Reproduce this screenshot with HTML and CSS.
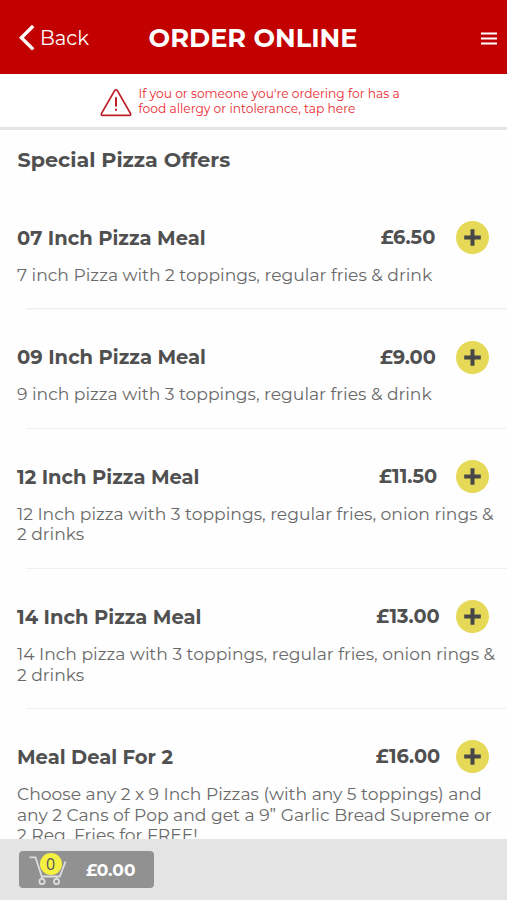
FILE: index.html
```
<!DOCTYPE html>
<html lang="en">
<head>
<meta charset="utf-8">
<title>Order Online</title>
<link rel="stylesheet" href="styles.css">
</head>
<body>
<svg class="defs" aria-hidden="true">
  <symbol id="plus" viewBox="0 0 33 33">
    <circle cx="16.5" cy="16.5" r="16.5" fill="#e5d957"/>
    <path d="M16.5 8.2v16.6M8.2 16.500h16.600" stroke="#484848" stroke-width="4" fill="none"/>
  </symbol>
</svg>
<div class="app">
  <header class="topbar">
    <a class="back">
      <svg class="chevron" viewBox="0 0 17 28"><path d="M15.200 2 3.400 13.700l11.800 11.700" fill="none" stroke="#fff" stroke-width="3.400"/></svg>
      <span>Back</span>
    </a>
    <h1 class="title">ORDER ONLINE</h1>
    <svg class="menu" viewBox="0 0 16 13"><path d="M0 1.600h16M0 6.600h16M0 11.600h16" stroke="#fff" stroke-width="2"/></svg>
  </header>
  <div class="notice">
    <svg class="warning" viewBox="0 0 32 29"><path d="M16 1.700c.6 0 1 .3 1.300.8l13.200 23c.6 1 .1 1.900-1 1.900h-27c-1.100 0-1.600-.9-1-1.900l13.200-23c.3-.5.7-.8 1.300-.8z" fill="none" stroke="#bd2029" stroke-width="1.600"/><path d="M16 9.300v9.200M16 20.800v2" stroke="#bd2029" stroke-width="2"/></svg>
    <p class="notice-text">If you or someone you're ordering for has a<br>food allergy or intolerance, tap here</p>
  </div>
  <main class="list">
    <h2 class="section">Special Pizza Offers</h2>
    <article class="item">
      <div class="head"><h3 class="name">07 Inch Pizza Meal</h3><span class="price">£6.50</span><svg class="add"><use href="#plus"/></svg></div>
      <p class="desc">7 inch Pizza with 2 toppings, regular fries &amp; drink</p>
    </article>
    <article class="item">
      <div class="head"><h3 class="name">09 Inch Pizza Meal</h3><span class="price">£9.00</span><svg class="add"><use href="#plus"/></svg></div>
      <p class="desc">9 inch pizza with 3 toppings, regular fries &amp; drink</p>
    </article>
    <article class="item">
      <div class="head"><h3 class="name">12 Inch Pizza Meal</h3><span class="price">£11.50</span><svg class="add"><use href="#plus"/></svg></div>
      <p class="desc">12 Inch pizza with 3 toppings, regular fries, onion rings &amp;<br>2 drinks</p>
    </article>
    <article class="item">
      <div class="head"><h3 class="name">14 Inch Pizza Meal</h3><span class="price">£13.00</span><svg class="add"><use href="#plus"/></svg></div>
      <p class="desc">14 Inch pizza with 3 toppings, regular fries, onion rings &amp;<br>2 drinks</p>
    </article>
    <article class="item">
      <div class="head"><h3 class="name">Meal Deal For 2</h3><span class="price">£16.00</span><svg class="add"><use href="#plus"/></svg></div>
      <p class="desc">Choose any 2 x 9 Inch Pizzas (with any 5 toppings) and<br>any 2 Cans of Pop and get a 9” Garlic Bread Supreme or<br>2 Reg. Fries for FREE!</p>
    </article>
  </main>
  <footer class="bottombar">
    <div class="basket">
      <div class="cart">
        <svg class="cart-icon" viewBox="0 0 38 32"><g fill="none" stroke="#ddd" stroke-width="1.800"><path d="M.5 3.300h6l6.300 19.200h18L36.500 7.500"/><path d="M12.800 22.500v2.500M28 22.500v2.500"/><circle cx="13" cy="27.500" r="2.600"/><circle cx="27.500" cy="27.500" r="2.600"/></g></svg>
        <span class="badge">0</span>
      </div>
      <span class="total">£0.00</span>
    </div>
  </footer>
</div>
</body>
</html>
```
FILE: styles.css
```
* { box-sizing: border-box; margin: 0; padding: 0; }

body {
  font-family: Montserrat, Inter, sans-serif;
  color: #505050;
  background: #fefefe;
}

.defs { display: none; }

.app {
  display: flex;
  flex-direction: column;
  height: 900px;
  overflow: hidden;
}

.topbar {
  flex: none;
  display: grid;
  grid-template-columns: 1fr auto 1fr;
  align-items: center;
  height: 74px;
  padding: 2px 10px 0 18px;
  background: #c20000;
  color: #fff;
}

.back {
  display: flex;
  align-items: center;
  gap: 5px;
  font-size: 19.6px;
}

.chevron { width: 17px; height: 28px; }

.title {
  margin: 0 9px 2px 0;
  font-size: 25.6px;
  font-weight: 700;
  white-space: nowrap;
}

.menu { width: 16px; height: 13px; justify-self: end; }

.notice {
  flex: none;
  display: flex;
  align-items: center;
  gap: 6px;
  height: 56px;
  padding-left: 100px;
  border-bottom: 3px solid #e4e4e4;
  background: #fff;
}

.warning { width: 32px; height: 29px; margin-top: 4px; }

.notice-text {
  padding: 3px 0 0 0.5px;
  font-size: 12.25px;
  line-height: 14.6px;
  color: #ea2a30;
}

.list { flex: 1; min-height: 0; overflow: hidden; }

.section {
  height: 60.4px;
  padding-left: 17.5px;
  font-size: 20.7px;
  font-weight: 700;
  line-height: 60px;
}

.item {
  padding: 30.6px 0 24.1px 17px;
  background: linear-gradient(#efefef, #efefef) 26px 100% / 100% 1.5px no-repeat;
}

.head {
  display: grid;
  grid-template-columns: 1fr 96px 33px;
  align-items: center;
  height: 33px;
  padding-right: 18px;
}

.name, .price {
  font-size: 19.4px;
  font-weight: 700;
  line-height: 33px;
}

.name { font-size: 19.5px; padding-top: 1px; }

.price { text-align: center; }

.add { width: 33px; height: 33px; }

.desc {
  margin-top: 11px;
  font-size: 17.16px;
  line-height: 20.7px;
  color: #6a6a6a;
  white-space: nowrap;
}

.bottombar {
  flex: none;
  height: 61px;
  padding: 12px 19px;
  background: #e4e4e4;
}

.basket {
  display: flex;
  align-items: center;
  width: 135px;
  height: 37px;
  padding-left: 10px;
  border-radius: 4px;
  background: #919191;
}

.cart { position: relative; width: 38px; height: 32px; }

.cart-icon { display: block; width: 38px; height: 32px; }

.badge {
  position: absolute;
  left: 10.5px;
  top: -1px;
  width: 22px;
  height: 22px;
  border-radius: 50%;
  background: #f5f142;
  color: #555;
  font-family: "Open Sans", sans-serif;
  font-size: 16px;
  line-height: 22px;
  text-align: center;
}

.total {
  margin-left: 19px;
  color: #fff;
  font-size: 17px;
  font-weight: 700;
}
```
